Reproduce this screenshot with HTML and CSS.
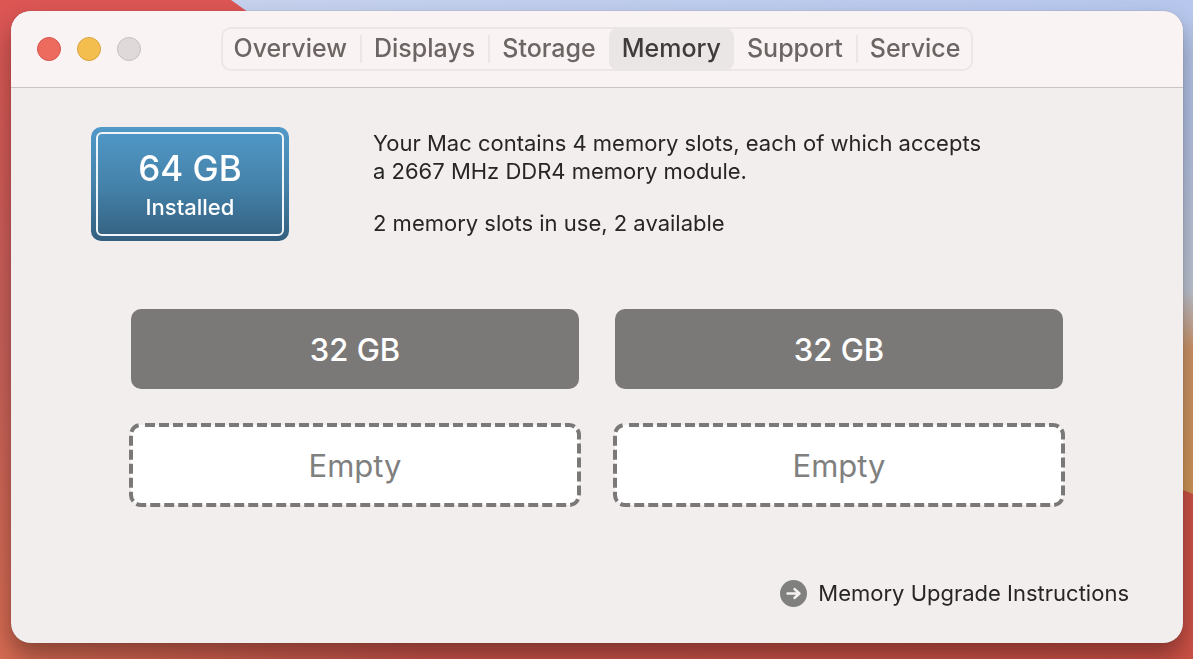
FILE: index.html
```html
<!DOCTYPE html>
<html lang="en">
<head>
<meta charset="utf-8">
<title>About This Mac</title>
<link rel="stylesheet" href="styles.css">
</head>
<body>
<svg class="wallpaper" viewBox="0 0 1193 659" preserveAspectRatio="none" aria-hidden="true">
  <defs>
    <linearGradient id="red" x1="0" y1="0" x2="0" y2="1">
      <stop offset="0" stop-color="#dc5654"/>
      <stop offset="0.5" stop-color="#c9605a"/>
      <stop offset="1" stop-color="#d66b52"/>
    </linearGradient>
    <linearGradient id="base" x1="0" y1="0" x2="1" y2="0">
      <stop offset="0" stop-color="#d66b52"/>
      <stop offset="0.35" stop-color="#c8534a"/>
      <stop offset="1" stop-color="#cd5146"/>
    </linearGradient>
    <linearGradient id="top" x1="0" y1="0" x2="1" y2="0">
      <stop offset="0" stop-color="#c6d2ee"/>
      <stop offset="1" stop-color="#b7c7ed"/>
    </linearGradient>
    <linearGradient id="sky" x1="0" y1="0" x2="0" y2="1">
      <stop offset="0" stop-color="#b7c7ed"/>
      <stop offset="0.2" stop-color="#b4c2e4"/>
      <stop offset="0.44" stop-color="#bfc6d4"/>
      <stop offset="0.53" stop-color="#cf9468"/>
      <stop offset="0.75" stop-color="#cf9657"/>
    </linearGradient>
  </defs>
  <rect width="1193" height="659" fill="url(#sky)"/>
  <path d="M231 0H1193V20H260Z" fill="url(#top)"/>
  <path d="M0 0H231L330 70V659H0Z" fill="url(#red)"/>
  <path d="M0 640H1000V430L1183 490L1193 494V659H0Z" fill="url(#base)"/>
</svg>
<main class="window">
  <header class="titlebar">
    <div class="controls">
      <button class="light close" aria-label="Close"></button>
      <button class="light minimize" aria-label="Minimize"></button>
      <button class="light zoom" aria-label="Zoom" disabled></button>
    </div>
    <nav class="tabs" aria-label="Sections">
      <button class="tab">Overview</button>
      <button class="tab divided">Displays</button>
      <button class="tab divided">Storage</button>
      <button class="tab selected" aria-current="page">Memory</button>
      <button class="tab">Support</button>
      <button class="tab divided">Service</button>
    </nav>
  </header>
  <section class="content">
    <div class="summary">
      <div class="badge">
        <div class="badge-frame">
          <strong class="badge-size">64 GB</strong>
          <span class="badge-label">Installed</span>
        </div>
      </div>
      <div class="description">
        <p>Your Mac contains 4 memory slots, each of which accepts<br>a 2667 MHz DDR4 memory module.</p>
        <p>2 memory slots in use, 2 available</p>
      </div>
    </div>
    <div class="slots">
      <div class="slot filled">32 GB</div>
      <div class="slot filled">32 GB</div>
      <div class="slot empty"><svg class="outline" aria-hidden="true"><rect width="100%" height="100%" rx="10"/></svg><span class="slot-text">Empty</span></div>
      <div class="slot empty"><svg class="outline" aria-hidden="true"><rect width="100%" height="100%" rx="10"/></svg><span class="slot-text">Empty</span></div>
    </div>
    <footer class="footer">
      <a class="help" href="#">
        <svg class="help-icon" viewBox="0 0 27 27" aria-hidden="true">
          <circle cx="13.5" cy="13.5" r="13.5" fill="#80807f"/>
          <path d="M7.6 13.5H19.2M14.6 9.1L19.4 13.5L14.6 17.9" fill="none" stroke="#f5f2f1" stroke-width="2.6" stroke-linecap="round" stroke-linejoin="round"/>
        </svg>
        <span>Memory Upgrade Instructions</span>
      </a>
    </footer>
  </section>
</main>
</body>
</html>
```
FILE: styles.css
```css
* {
  box-sizing: border-box;
}

body {
  margin: 0;
  min-height: 100vh;
  padding: 11px 10px 16px 11px;
  display: flex;
  background: #c8534a;
  color: #272525;
  font-family: Inter, "Liberation Sans", sans-serif;
  font-size: 22px;
  line-height: 28px;
}

.wallpaper {
  position: fixed;
  inset: 0;
  width: 100%;
  height: 100%;
  z-index: -1;
}

.window {
  flex: 1;
  display: flex;
  flex-direction: column;
  border-radius: 20px;
  overflow: hidden;
  background: #f2eeed;
  box-shadow: 0 0 1px rgba(60, 30, 40, 0.5), 0 14px 24px rgba(0, 0, 0, 0.35);
}

.titlebar {
  display: grid;
  grid-template-columns: 1fr auto 1fr;
  align-items: center;
  height: 77px;
  padding: 0 26px;
  background: #f9f3f3;
  border-bottom: 1px solid #c9c5c5;
}

.controls {
  display: flex;
  gap: 16px;
}

.light {
  width: 24px;
  height: 24px;
  padding: 0;
  border: 1px solid;
  border-radius: 50%;
}

.close {
  background: #ec6a5e;
  border-color: #d8564c;
}

.minimize {
  background: #f4be4f;
  border-color: #d9a440;
}

.zoom {
  background: #dfd9d9;
  border-color: #c6c1c1;
}

.tabs {
  display: flex;
  height: 44px;
  border-radius: 10px;
  box-shadow: inset 0 0 0 2px #ece6e6;
}

.tab {
  display: flex;
  align-items: center;
  padding: 0 13px 2px;
  border: 0;
  background: none;
  color: #6c6564;
  font: inherit;
  font-size: 25px;
  font-weight: 500;
}

.divided::before {
  content: "";
  width: 2px;
  height: 28px;
  margin: 2px 12px 0 -13px;
  background: #ece6e6;
}

.selected {
  border-radius: 10px;
  background: #ebe6e6;
  color: #3e3b3a;
}

.content {
  flex: 1;
  display: flex;
  flex-direction: column;
  padding: 39px 54px 36px 80px;
}

.summary {
  display: flex;
  align-items: flex-start;
  gap: 84px;
}

.badge {
  width: 198px;
  padding: 5px;
  border-radius: 10px;
  background: linear-gradient(#5199c8, #4583ab 50%, #335f7f);
}

.badge-frame {
  display: flex;
  flex-direction: column;
  align-items: center;
  height: 104px;
  padding-top: 14px;
  border: 2px solid #f0f5f9;
  border-radius: 6px;
  color: #ffffff;
}

.badge-size {
  font-size: 35px;
  font-weight: 500;
  line-height: 40px;
}

.badge-label {
  margin-top: 5px;
  font-weight: 500;
}

.description {
  padding-top: 2px;
}

.description p {
  margin: 0;
}

.description p + p {
  margin-top: 24px;
}

.slots {
  display: grid;
  grid-template-columns: 1fr 1fr;
  gap: 36px;
  margin: 68px 66px 0 40px;
}

.slot {
  position: relative;
  display: flex;
  align-items: center;
  justify-content: center;
  height: 80px;
  padding-top: 2px;
  border-radius: 10px;
  font-size: 31px;
}

.filled {
  background: #7b7977;
  color: #ffffff;
  font-weight: 500;
}

.empty {
  background: #ffffff;
  color: #80807f;
}

.outline {
  position: absolute;
  inset: 0;
  width: 100%;
  height: 100%;
  overflow: visible;
  fill: none;
  stroke: #7b7977;
  stroke-width: 4px;
  stroke-dasharray: 10 4;
  stroke-dashoffset: 10px;
}

.footer {
  display: flex;
  justify-content: flex-end;
  margin-top: auto;
}

.help {
  display: flex;
  align-items: center;
  gap: 11px;
  color: inherit;
  text-decoration: none;
}

.help-icon {
  width: 27px;
  height: 27px;
}
```
